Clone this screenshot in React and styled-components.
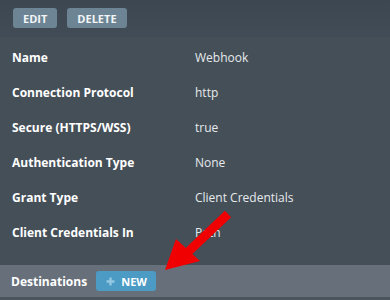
import styled, { createGlobalStyle } from "styled-components";

const GlobalStyle = createGlobalStyle`
    html, body {
        margin: 0;
        padding: 0;
        background: #454f58;
    }
    body {
        font-family: "Open Sans", "Noto Sans", sans-serif;
        width: 390px;
        height: 300px;
        overflow: hidden;
    }
`;

const Panel = styled.div`
    position: relative;
    width: 390px;
    height: 300px;
    display: flex;
    flex-direction: column;
    background: #454f58;
`;

const Toolbar = styled.div`
    height: 37px;
    box-sizing: border-box;
    display: flex;
    align-items: center;
    gap: 10px;
    padding: 0 13px 1px;
    background: linear-gradient(180deg, #3c4751 0%, #414c56 100%);
`;

const ActionButton = styled.button`
    height: 20px;
    padding: 0 10px;
    border: none;
    border-radius: 3px;
    background: #6c8493;
    color: #f2f5f7;
    font-family: "Open Sans", sans-serif;
    font-weight: 700;
    font-size: 11px;
    text-transform: uppercase;
`;

const Details = styled.div`
    padding: 3px 0 15px;
    display: flex;
    flex-direction: column;
`;

const Row = styled.div`
    height: 35px;
    display: flex;
    align-items: center;
    padding-left: 12px;
`;

const Label = styled.div`
    width: 183px;
    color: #ffffff;
    font-weight: 700;
    font-size: 12px;
`;

const Value = styled.div`
    color: #e6eaed;
    font-size: 12px;
`;

const Footer = styled.div`
    height: 32px;
    display: flex;
    align-items: center;
    gap: 9px;
    padding-left: 11px;
    background: #67707a;
    border-bottom: 3px solid #4b545d;
`;

const FooterTitle = styled.span`
    color: #ffffff;
    font-weight: 700;
    font-size: 12px;
`;

const NewButton = styled.button`
    height: 20px;
    width: 60px;
    display: flex;
    align-items: center;
    justify-content: center;
    gap: 6px;
    border: none;
    border-radius: 3px;
    background: #4b9bc4;
    color: #ffffff;
    font-family: "Open Sans", sans-serif;
    font-weight: 700;
    font-size: 11px;
    padding: 0 0 0 1px;
`;

const Arrow = styled.svg`
    position: absolute;
    left: 160px;
    top: 208px;
`;

const rows = [
    ["Name", "Webhook"],
    ["Connection Protocol", "http"],
    ["Secure (HTTPS/WSS)", "true"],
    ["Authentication Type", "None"],
    ["Grant Type", "Client Credentials"],
    ["Client Credentials In", "Path"],
];

const PlusIcon = () => (
    <svg width="9" height="9" viewBox="0 0 9 9">
        <path d="M4.5 0.5v8M0.5 4.5h8" stroke="#93c7e2" strokeWidth="2.4" />
    </svg>
);

const App = () => {
    return (
        <Panel>
            <GlobalStyle />
            <Toolbar>
                <ActionButton>Edit</ActionButton>
                <ActionButton>Delete</ActionButton>
            </Toolbar>
            <Details>
                {rows.map(([label, value]) => (
                    <Row key={label}>
                        <Label>{label}</Label>
                        <Value>{value}</Value>
                    </Row>
                ))}
            </Details>
            <Footer>
                <FooterTitle>Destinations</FooterTitle>
                <NewButton>
                    <PlusIcon />
                    NEW
                </NewButton>
            </Footer>
            {/* red pointer arrow over the panel */}
            <Arrow width="75" height="68" viewBox="0 0 75 68">
                <path d="M68 6 L28 44" stroke="#f00000" strokeWidth="9" strokeLinecap="butt" />
                <polygon points="5,62 16,31 40,53" fill="#f00000" />
            </Arrow>
        </Panel>
    );
};

export default App;
